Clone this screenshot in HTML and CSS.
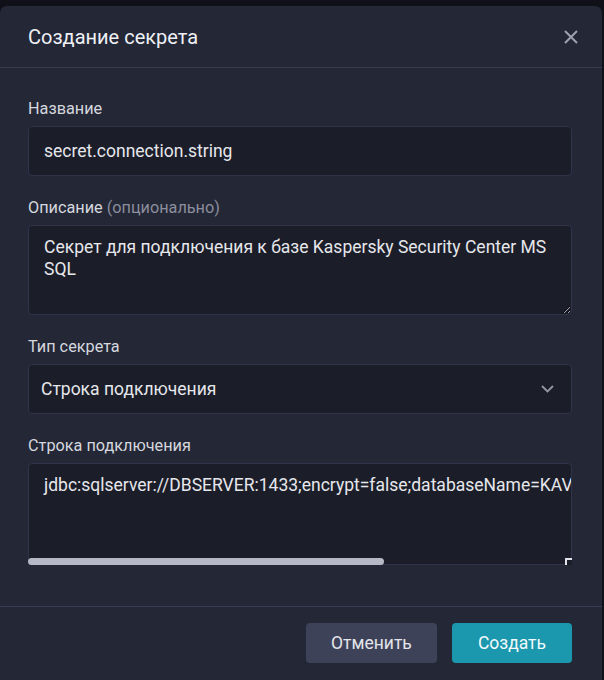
FILE: index.html
```html
<!DOCTYPE html>
<html lang="ru">
<head>
<meta charset="utf-8">
<title>Создание секрета</title>
<link rel="stylesheet" href="styles.css">
</head>
<body>
  <div class="overlay">
    <div class="modal">
      <div class="modal-header">
        <h2 class="modal-title">Создание секрета</h2>
        <button class="close-btn" type="button" aria-label="Закрыть">
          <svg width="14" height="14" viewBox="0 0 14 14">
            <path d="M1 1 L13 13 M13 1 L1 13" stroke="#9ea1ad" stroke-width="2" fill="none"/>
          </svg>
        </button>
      </div>

      <div class="modal-body">
        <div class="field">
          <label class="field-label">Название</label>
          <input class="input" type="text" value="secret.connection.string">
        </div>

        <div class="field">
          <label class="field-label">Описание <span class="optional">(опционально)</span></label>
          <textarea class="textarea description">Секрет для подключения к базе Kaspersky Security Center MS SQL</textarea>
        </div>

        <div class="field">
          <label class="field-label">Тип секрета</label>
          <div class="select">
            <span>Строка подключения</span>
            <svg width="13" height="8" viewBox="0 0 13 8">
              <path d="M1 1 L6.5 6.5 L12 1" stroke="#9497a4" stroke-width="1.8" fill="none"/>
            </svg>
          </div>
        </div>

        <div class="field">
          <label class="field-label">Строка подключения</label>
          <div class="conn-wrap">
            <textarea class="textarea conn" wrap="off">jdbc:sqlserver://DBSERVER:1433;encrypt=false;databaseName=KAV;integratedSecurity=true;trustServerCertificate=true</textarea>
            <!-- horizontal scroll thumb and resize corner -->
            <div class="scroll-thumb"></div>
            <div class="resize-corner"></div>
          </div>
        </div>
      </div>

      <div class="modal-footer">
        <button class="btn btn-secondary" type="button">Отменить</button>
        <button class="btn btn-primary" type="button">Создать</button>
      </div>
    </div>
  </div>
</body>
</html>
```

FILE: styles.css
```css
html, body {
  height: 100%;
  margin: 0;
  overflow: hidden;
  background: #101118;
  font-family: Roboto, "Liberation Sans", sans-serif;
}

.overlay {
  height: 100%;
  padding-top: 6px;
  box-sizing: border-box;
}

.modal {
  width: 602px;
  height: 100%;
  background: #242736;
  border-radius: 7px 7px 0 0;
  display: flex;
  flex-direction: column;
}

.modal-header {
  height: 61px;
  padding: 0 24px 0 28px;
  display: flex;
  align-items: center;
  justify-content: space-between;
  border-bottom: 1px solid #383a50;
}

.modal-title {
  margin: 0;
  font-size: 20px;
  font-weight: 400;
  color: #eef0f5;
}

.close-btn {
  background: none;
  border: 0;
  padding: 0;
  width: 14px;
  height: 14px;
  display: flex;
  cursor: pointer;
}

.modal-body {
  padding: 31px 30px 19px 28px;
}

.field {
  display: flex;
  flex-direction: column;
  margin-bottom: 22px;
}

.field-label {
  font-size: 16.25px;
  line-height: 20px;
  color: #d5d7df;
  margin-bottom: 7px;
}

.optional {
  color: #8b8e9c;
}

.input,
.textarea,
.select {
  box-sizing: border-box;
  width: 100%;
  background: #1b1d28;
  border: 1px solid #30334a;
  border-radius: 4px;
  color: #e6e7ec;
  font-family: Roboto, "Liberation Sans", sans-serif;
  font-size: 17.5px;
  outline: none;
}

.input {
  height: 50px;
  padding: 0 15px;
}

.textarea {
  display: block;
  margin: 0;
  padding: 10px 15px;
  line-height: 22px;
}

.description {
  height: 90px;
}

.conn-wrap {
  position: relative;
}

.conn {
  height: 102px;
  overflow: hidden;
  white-space: pre;
  resize: none;
}

.scroll-thumb {
  position: absolute;
  left: 0;
  bottom: 0;
  width: 356px;
  height: 7px;
  background: #b6b8c5;
  border-radius: 4px;
}

.resize-corner {
  position: absolute;
  right: 0;
  bottom: 0;
  width: 5px;
  height: 5px;
  border-top: 2px solid #e2e3e8;
  border-left: 2px solid #e2e3e8;
  background: #1b1d28;
}

.select {
  height: 50px;
  padding: 0 17px 0 12px;
  display: flex;
  align-items: center;
  justify-content: space-between;
}

.modal-footer {
  flex: 1;
  border-top: 1px solid #3c3a5a;
  padding: 16px 30px 0 28px;
  display: flex;
  justify-content: flex-end;
  align-items: flex-start;
  gap: 15px;
}

.btn {
  height: 40px;
  padding: 0 25px;
  border: 0;
  border-radius: 4px;
  font-family: Roboto, "Liberation Sans", sans-serif;
  font-size: 17.5px;
  cursor: pointer;
}

.btn-secondary {
  background: #3e4259;
  color: #e4e5ea;
}

.btn-primary {
  background: #1b97ae;
  color: #f2fbfd;
  padding: 0 26px;
}
```
